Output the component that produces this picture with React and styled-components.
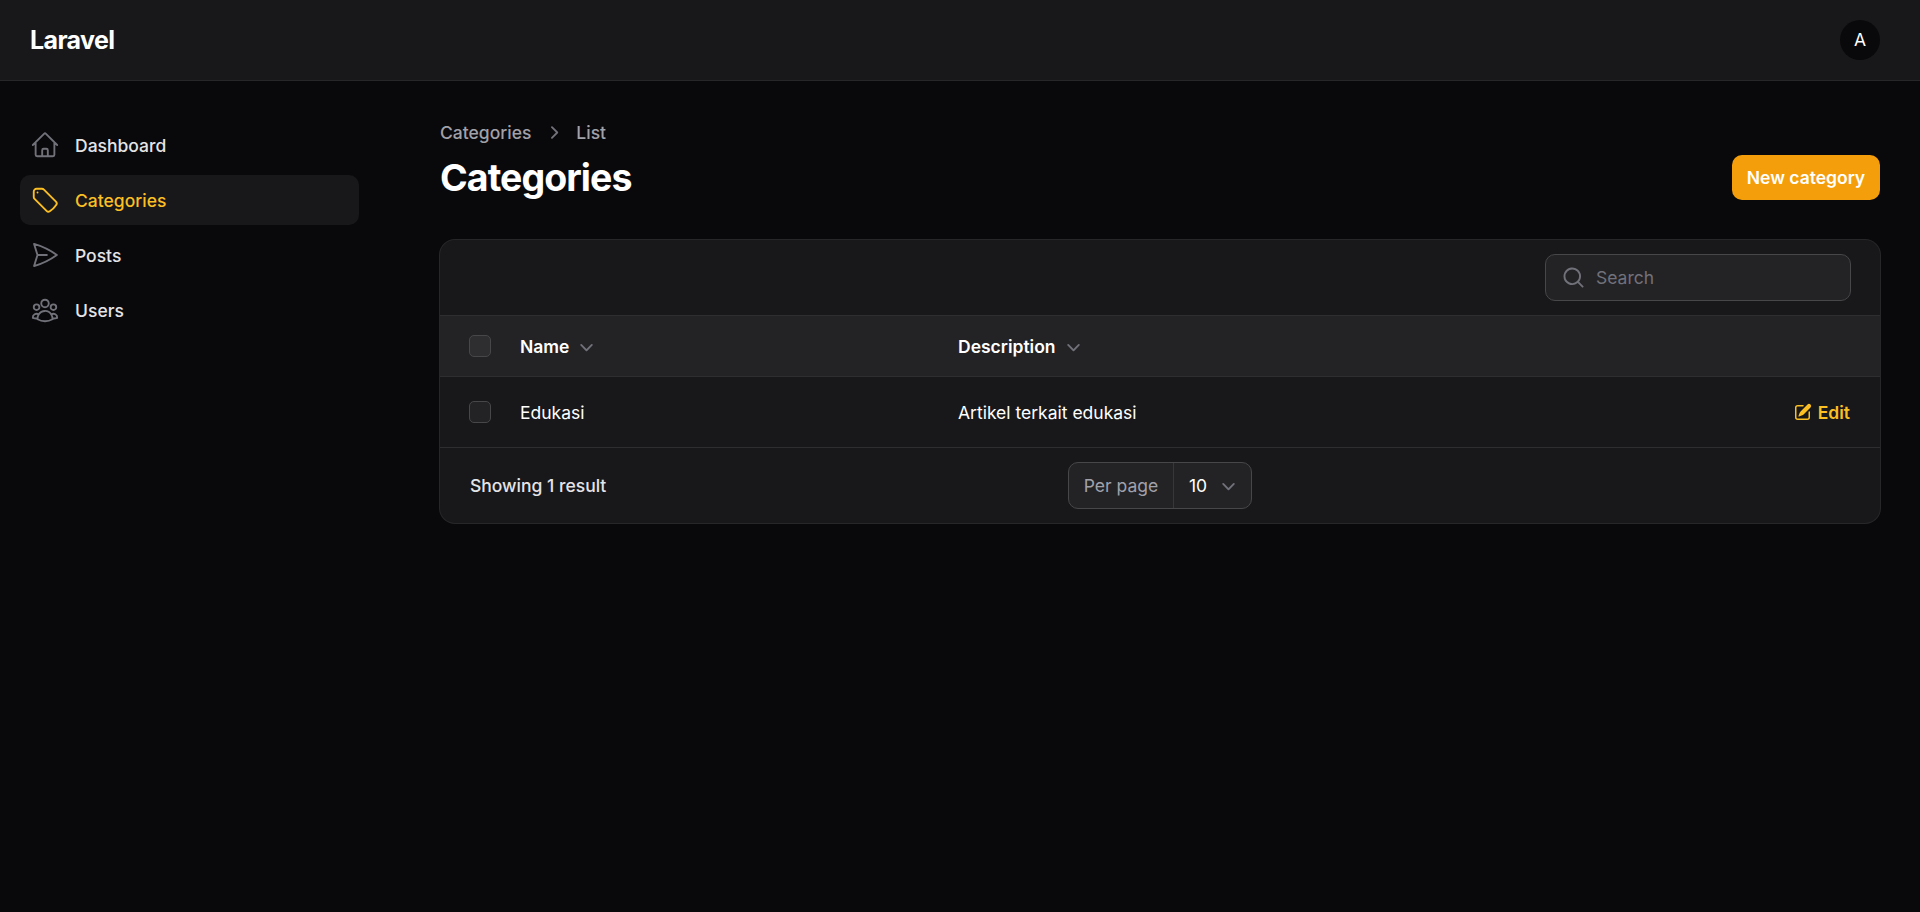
import React from "react";
import styled, { createGlobalStyle } from "styled-components";

const GlobalStyle = createGlobalStyle`
  html, body {
    margin: 0;
    padding: 0;
    background: #09090b;
  }
  * {
    box-sizing: border-box;
  }
  body {
    font-family: Inter, "Liberation Sans", sans-serif;
    font-size: 17.5px;
    line-height: 25px;
    color: #fff;
  }
`;

const Page = styled.div`
  min-height: 912px;
  background: #09090b;
`;

const Topbar = styled.header`
  height: 81px;
  padding: 0 40px 1px 30px;
  display: flex;
  align-items: center;
  justify-content: space-between;
  background: #18181b;
  border-bottom: 1px solid #27272a;
`;

const Logo = styled.div`
  font-size: 25px;
  line-height: 30px;
  font-weight: 700;
  letter-spacing: -0.625px;
  color: #fff;
`;

const Avatar = styled.div`
  width: 40px;
  height: 40px;
  border-radius: 50%;
  display: flex;
  align-items: center;
  justify-content: center;
  background: #09090b;
  color: #fff;
`;

const Layout = styled.div`
  display: flex;
  align-items: flex-start;
`;

const Sidebar = styled.nav`
  flex: 0 0 379px;
  padding: 39px 20px 0;
  display: flex;
  flex-direction: column;
  gap: 5px;
`;

const NavItem = styled.a`
  height: 50px;
  padding: 0 10px;
  display: flex;
  align-items: center;
  gap: 15px;
  border-radius: 10px;
  font-weight: 500;
  background: ${(p) => (p.$active ? "#18181b" : "transparent")};
  color: ${(p) => (p.$active ? "#fbbf24" : "#e4e4e7")};

  svg {
    color: ${(p) => (p.$active ? "#fbbf24" : "#71717a")};
  }
`;

const Main = styled.main`
  flex: 1;
  min-width: 0;
  padding: 39px 40px 0 61px;
`;

const Header = styled.div`
  display: flex;
  align-items: flex-end;
  justify-content: space-between;
`;

const Breadcrumbs = styled.div`
  display: flex;
  align-items: center;
  gap: 10px;
  font-weight: 500;
  color: #a1a1aa;
  margin-bottom: 10px;

  svg {
    color: #71717a;
  }
`;

const Title = styled.h1`
  margin: 0;
  font-size: 37.5px;
  line-height: 45px;
  font-weight: 700;
  letter-spacing: -0.94px;
  color: #fff;
`;

const PrimaryButton = styled.button`
  height: 45px;
  width: 148px;
  padding: 0;
  border: 0;
  border-radius: 10px;
  background: #f59e0b;
  color: #fff;
  font: 600 17.5px/25px Inter, "Liberation Sans", sans-serif;
`;

const Card = styled.section`
  margin-top: 40px;
  border-radius: 15px;
  overflow: hidden;
  background: #18181b;
  box-shadow: 0 0 0 1px #27272a;
`;

const Toolbar = styled.div`
  height: 75px;
  padding: 0 29px 0 30px;
  display: flex;
  align-items: center;
  justify-content: flex-end;
`;

const SearchBox = styled.div`
  width: 306px;
  height: 47px;
  padding: 0 15px;
  display: flex;
  align-items: center;
  gap: 10px;
  border-radius: 10px;
  background: #232326;
  border: 1px solid #47474a;
  color: #71717a;
`;

const Row = styled.div`
  display: grid;
  grid-template-columns: 50px 438px 1fr auto;
  align-items: center;
  padding: 0 30px;
  border-top: 1px solid #2e2e31;
  height: ${(p) => (p.$head ? "61px" : "71px")};
  background: ${(p) => (p.$head ? "#232326" : "transparent")};
  font-weight: ${(p) => (p.$head ? 600 : 400)};
`;

const Checkbox = styled.span`
  display: block;
  width: 22px;
  height: 22px;
  margin-left: -1px;
  border-radius: 5px;
  background: ${(p) => (p.$head ? "#2e2e31" : "#232326")};
  border: 1px solid #47474a;
`;

const HeadCell = styled.div`
  display: flex;
  align-items: center;
  gap: 5px;
  color: #fff;

  svg {
    color: #71717a;
  }
`;

const Cell = styled.div`
  color: #fff;
`;

const EditLink = styled.a`
  display: flex;
  align-items: center;
  gap: 5px;
  color: #fbbf24;
  font-weight: 600;
`;

const Footer = styled.div`
  height: 76px;
  padding: 0 30px;
  display: grid;
  grid-template-columns: 1fr auto 1fr;
  align-items: center;
  border-top: 1px solid #2e2e31;
  color: #e4e4e7;
  font-weight: 500;
`;

const PerPage = styled.div`
  height: 47px;
  width: 184px;
  display: flex;
  align-items: stretch;
  border-radius: 10px;
  background: #232326;
  border: 1px solid #47474a;
  font-weight: 400;
`;

const PerPageLabel = styled.span`
  width: 105px;
  display: flex;
  align-items: center;
  justify-content: center;
  color: #a1a1aa;
  border-right: 1px solid #37373a;
`;

const PerPageValue = styled.span`
  flex: 1;
  padding: 0 10px 0 15px;
  display: flex;
  align-items: center;
  justify-content: space-between;
  color: #fff;

  svg {
    color: #71717a;
  }
`;

const Outline = ({ children }) => (
  <svg
    width="30"
    height="30"
    viewBox="0 0 24 24"
    fill="none"
    stroke="currentColor"
    strokeWidth="1.5"
    strokeLinecap="round"
    strokeLinejoin="round"
  >
    {children}
  </svg>
);

const Mini = ({ size = 25, d }) => (
  <svg width={size} height={size} viewBox="0 0 20 20" fill="currentColor">
    <path fillRule="evenodd" clipRule="evenodd" d={d} />
  </svg>
);

const HomeIcon = () => (
  <Outline>
    <path d="m2.25 12 8.954-8.955c.44-.439 1.152-.439 1.591 0L21.75 12M4.5 9.75v10.125c0 .621.504 1.125 1.125 1.125H9.75v-4.875c0-.621.504-1.125 1.125-1.125h2.25c.621 0 1.125.504 1.125 1.125V21h4.125c.621 0 1.125-.504 1.125-1.125V9.75M8.25 21h8.25" />
  </Outline>
);

const TagIcon = () => (
  <Outline>
    <path d="M9.568 3H5.25A2.25 2.25 0 0 0 3 5.25v4.318c0 .597.237 1.17.659 1.591l9.581 9.581c.699.699 1.78.872 2.607.33a18.095 18.095 0 0 0 5.223-5.223c.542-.827.369-1.908-.33-2.607L11.16 3.66A2.25 2.25 0 0 0 9.568 3Z" />
    <path d="M6 6h.008v.008H6V6Z" />
  </Outline>
);

const PlaneIcon = () => (
  <Outline>
    <path d="M6 12 3.269 3.125A59.769 59.769 0 0 1 21.485 12 59.768 59.768 0 0 1 3.27 20.875L5.999 12Zm0 0h7.5" />
  </Outline>
);

const UsersIcon = () => (
  <Outline>
    <path d="M18 18.72a9.094 9.094 0 0 0 3.741-.479 3 3 0 0 0-4.682-2.72m.94 3.198.001.031c0 .225-.012.447-.037.666A11.944 11.944 0 0 1 12 21c-2.17 0-4.207-.576-5.963-1.584A6.062 6.062 0 0 1 6 18.719m12 0a5.971 5.971 0 0 0-.941-3.197m0 0A5.995 5.995 0 0 0 12 12.75a5.995 5.995 0 0 0-5.058 2.772m0 0a3 3 0 0 0-4.681 2.72 8.986 8.986 0 0 0 3.74.477m.94-3.197a5.971 5.971 0 0 0-.94 3.197M15 6.75a3 3 0 1 1-6 0 3 3 0 0 1 6 0Zm6 3a2.25 2.25 0 1 1-4.5 0 2.25 2.25 0 0 1 4.5 0Zm-13.5 0a2.25 2.25 0 1 1-4.5 0 2.25 2.25 0 0 1 4.5 0Z" />
  </Outline>
);

const SearchIcon = () => (
  <Mini d="M9 3.5a5.5 5.5 0 1 0 0 11 5.5 5.5 0 0 0 0-11ZM2 9a7 7 0 1 1 12.452 4.391l3.328 3.329a.75.75 0 1 1-1.06 1.06l-3.329-3.328A7 7 0 0 1 2 9Z" />
);

const ChevronDown = () => (
  <Mini d="M5.22 8.22a.75.75 0 0 1 1.06 0L10 11.94l3.72-3.72a.75.75 0 1 1 1.06 1.06l-4.25 4.25a.75.75 0 0 1-1.06 0L5.22 9.28a.75.75 0 0 1 0-1.06Z" />
);

const ChevronRight = () => (
  <Mini d="M8.22 5.22a.75.75 0 0 1 1.06 0l4.25 4.25a.75.75 0 0 1 0 1.06l-4.25 4.25a.75.75 0 0 1-1.06-1.06L11.94 10 8.22 6.28a.75.75 0 0 1 0-1.06Z" />
);

const PencilSquare = () => (
  <svg width="20" height="20" viewBox="0 0 20 20" fill="currentColor">
    <path d="m5.433 13.917 1.262-3.155A4 4 0 0 1 7.58 9.42l6.92-6.918a2.121 2.121 0 0 1 3 3l-6.92 6.918c-.383.383-.84.685-1.343.886l-3.154 1.262a.5.5 0 0 1-.65-.65Z" />
    <path d="M3.5 5.75c0-.69.56-1.25 1.25-1.25H10A.75.75 0 0 0 10 3H4.75A2.75 2.75 0 0 0 2 5.75v9.5A2.75 2.75 0 0 0 4.75 18h9.5A2.75 2.75 0 0 0 17 15.25V10a.75.75 0 0 0-1.5 0v5.25c0 .69-.56 1.25-1.25 1.25h-9.5c-.69 0-1.25-.56-1.25-1.25v-9.5Z" />
  </svg>
);

const navItems = [
  { label: "Dashboard", icon: <HomeIcon /> },
  { label: "Categories", icon: <TagIcon />, active: true },
  { label: "Posts", icon: <PlaneIcon /> },
  { label: "Users", icon: <UsersIcon /> },
];

function App() {
  return (
    <Page>
      <GlobalStyle />
      <Topbar>
        <Logo>Laravel</Logo>
        <Avatar>A</Avatar>
      </Topbar>
      <Layout>
        <Sidebar>
          {navItems.map((item) => (
            <NavItem key={item.label} $active={item.active}>
              {item.icon}
              {item.label}
            </NavItem>
          ))}
        </Sidebar>
        <Main>
          <Header>
            <div>
              <Breadcrumbs>
                <span>Categories</span>
                <ChevronRight />
                <span>List</span>
              </Breadcrumbs>
              <Title>Categories</Title>
            </div>
            <PrimaryButton>New category</PrimaryButton>
          </Header>
          <Card>
            <Toolbar>
              <SearchBox>
                <SearchIcon />
                Search
              </SearchBox>
            </Toolbar>
            <Row $head>
              <Checkbox $head />
              <HeadCell>
                Name <ChevronDown />
              </HeadCell>
              <HeadCell>
                Description <ChevronDown />
              </HeadCell>
              <span />
            </Row>
            <Row>
              <Checkbox />
              <Cell>Edukasi</Cell>
              <Cell>Artikel terkait edukasi</Cell>
              <EditLink>
                <PencilSquare />
                Edit
              </EditLink>
            </Row>
            <Footer>
              <span>Showing 1 result</span>
              <PerPage>
                <PerPageLabel>Per page</PerPageLabel>
                <PerPageValue>
                  10 <ChevronDown />
                </PerPageValue>
              </PerPage>
              <span />
            </Footer>
          </Card>
        </Main>
      </Layout>
    </Page>
  );
}

export default App;
